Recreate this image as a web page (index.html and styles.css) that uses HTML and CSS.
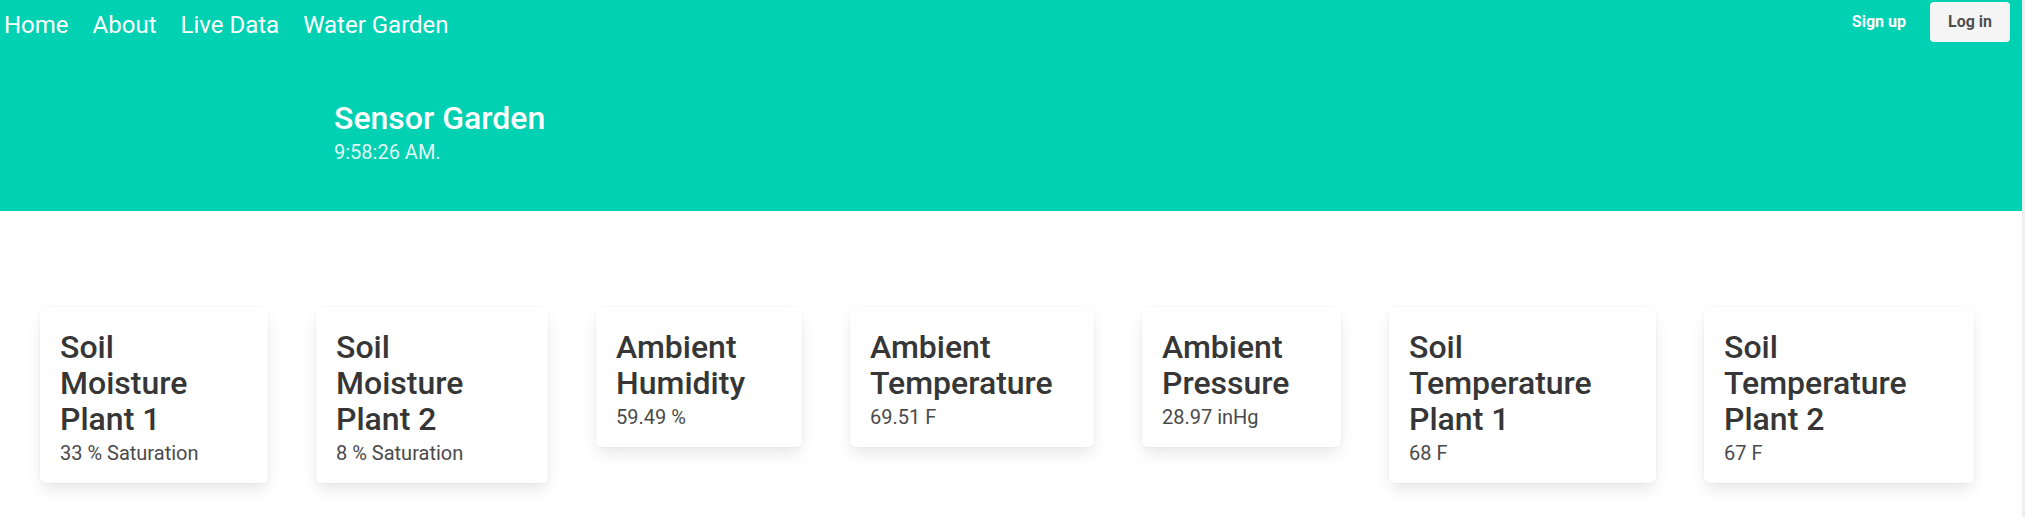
FILE: index.html
```html
<!DOCTYPE html>
<html lang="en">
<head>
<meta charset="utf-8">
<title>Sensor Garden</title>
<link rel="stylesheet" href="styles.css">
</head>
<body>
<div class="page">
  <nav class="navbar">
    <div class="nav-links">
      <a class="nav-link" href="#">Home</a>
      <a class="nav-link" href="#">About</a>
      <a class="nav-link" href="#">Live Data</a>
      <a class="nav-link" href="#">Water Garden</a>
    </div>
    <div class="nav-buttons">
      <a class="button button-primary" href="#"><strong>Sign up</strong></a>
      <a class="button button-light" href="#">Log in</a>
    </div>
  </nav>
  <section class="hero">
    <div class="hero-body">
      <h1 class="hero-title">Sensor Garden</h1>
      <p class="hero-subtitle">9:58:26 AM.</p>
    </div>
  </section>
  <section class="cards">
    <div class="box w1">
      <h2 class="box-title">Soil Moisture Plant 1</h2>
      <p class="box-value">33 % Saturation</p>
    </div>
    <div class="box w2">
      <h2 class="box-title">Soil Moisture Plant 2</h2>
      <p class="box-value">8 % Saturation</p>
    </div>
    <div class="box w3">
      <h2 class="box-title">Ambient Humidity</h2>
      <p class="box-value">59.49 %</p>
    </div>
    <div class="box w4">
      <h2 class="box-title">Ambient Temperature</h2>
      <p class="box-value">69.51 F</p>
    </div>
    <div class="box w5">
      <h2 class="box-title">Ambient Pressure</h2>
      <p class="box-value">28.97 inHg</p>
    </div>
    <div class="box w6">
      <h2 class="box-title">Soil Temperature Plant 1</h2>
      <p class="box-value">68 F</p>
    </div>
    <div class="box w7">
      <h2 class="box-title">Soil Temperature Plant 2</h2>
      <p class="box-value">67 F</p>
    </div>
  </section>
</div>
</body>
</html>
```
FILE: styles.css
```css
html {
  background: #efefef;
}
body {
  margin: 0;
  font-family: Roboto, "Noto Sans", sans-serif;
  color: #4a4a4a;
}
.page {
  width: 2022px;
  min-height: 517px;
  background: #ffffff;
}
.navbar {
  display: flex;
  justify-content: space-between;
  align-items: flex-start;
  height: 52px;
  background: #00d1b2;
  padding: 0 12px 0 4px;
  box-sizing: border-box;
}
.nav-links {
  display: flex;
  gap: 24px;
  margin-top: 11px;
}
.nav-link {
  color: #ffffff;
  text-decoration: none;
  font-size: 24px;
  line-height: 28px;
}
.nav-buttons {
  display: flex;
  gap: 7px;
  margin-top: 2px;
}
.button {
  display: inline-flex;
  align-items: center;
  height: 40px;
  box-sizing: border-box;
  padding: 0 17px;
  border: 1px solid transparent;
  border-radius: 4px;
  font-size: 16px;
  line-height: 24px;
  text-decoration: none;
}
.button-primary {
  background: #00d1b2;
  color: #ffffff;
  padding: 0 16px 0 17px;
}
.button-light {
  background: #f5f5f5;
  color: rgba(0, 0, 0, 0.7);
  font-weight: 700;
}
.hero {
  background: #00d1b2;
}
.hero-body {
  padding: 48px 0 46px 334px;
}
.hero-title {
  margin: 0 0 4px 0;
  font-size: 32px;
  line-height: 36px;
  font-weight: 500;
  color: #ffffff;
}
.hero-subtitle {
  margin: 0;
  font-size: 20px;
  line-height: 25px;
  color: rgba(255, 255, 255, 0.9);
}
.cards {
  display: flex;
  align-items: flex-start;
  gap: 48px;
  padding: 96px 0 0 40px;
}
.box {
  box-sizing: border-box;
  flex: none;
  background: #ffffff;
  border-radius: 6px;
  padding: 22px 20px 17px 20px;
  box-shadow: 0 8px 16px -2px rgba(10, 10, 10, 0.1), 0 0 0 1px rgba(10, 10, 10, 0.02);
}
.w1 { width: 228px; }
.w2 { width: 232px; }
.w3 { width: 206px; }
.w4 { width: 244px; }
.w5 { width: 199px; }
.w6 { width: 267px; }
.w7 { width: 270px; }
.box-title {
  margin: 0 0 4px 0;
  font-size: 32px;
  line-height: 36px;
  font-weight: 500;
  color: #363636;
  max-width: 170px;
}
.box-value {
  margin: 0;
  font-size: 20px;
  line-height: 25px;
  color: #4a4a4a;
}
```
